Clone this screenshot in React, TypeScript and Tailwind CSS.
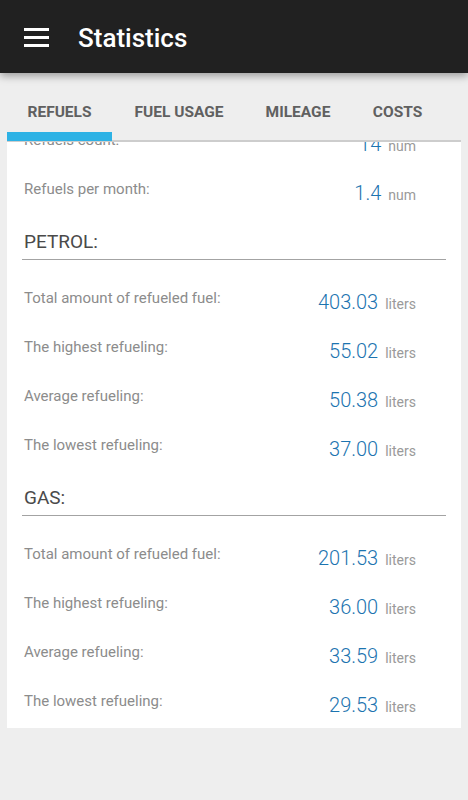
import React from 'react';

const tabs = [
  { label: 'REFUELS', w: 'w-[105px]', active: true },
  { label: 'FUEL USAGE', w: 'w-[134px]', active: false },
  { label: 'MILEAGE', w: 'w-[104px]', active: false },
  { label: 'COSTS', w: 'w-[95px]', active: false },
];

const sections = [
  {
    title: 'PETROL:',
    rows: [
      { label: 'Total amount of refueled fuel:', value: '403.03' },
      { label: 'The highest refueling:', value: '55.02' },
      { label: 'Average refueling:', value: '50.38' },
      { label: 'The lowest refueling:', value: '37.00' },
    ],
  },
  {
    title: 'GAS:',
    rows: [
      { label: 'Total amount of refueled fuel:', value: '201.53' },
      { label: 'The highest refueling:', value: '36.00' },
      { label: 'Average refueling:', value: '33.59' },
      { label: 'The lowest refueling:', value: '29.53' },
    ],
  },
];

function StatRow({ label, value, unit }: { label: string; value: string; unit: string }) {
  return (
    <div className="flex h-[49px] justify-between pl-[17px] pr-[45px]">
      <div className="pt-[9px] text-[15px] leading-[20px] text-[#8c8c8c]">{label}</div>
      <div className="flex items-baseline gap-[7px] pt-[11px]">
        <span className="text-[20px] font-light leading-[24px] text-[#1c74b0]">{value}</span>
        <span className="text-[14px] leading-[20px] text-[#9a9a9a]">{unit}</span>
      </div>
    </div>
  );
}

function SectionHeader({ title }: { title: string }) {
  return (
    <div className="pl-[15px] pr-[15px] pt-[11px]">
      <div className="pl-[2px] text-[19px] leading-[24px] text-[#4a4a4a]">{title}</div>
      <div className="mt-[5px] h-px bg-[#a3a3a3]" />
    </div>
  );
}

export default function App() {
  return (
    <div className="flex h-[800px] w-[468px] flex-col bg-[#eeeeee] font-['Roboto',sans-serif]">
      <header className="relative z-10 flex h-[73px] items-center bg-[#212121] pl-[24px] shadow-[0_3px_8px_rgba(0,0,0,0.35)]">
        <svg width="25" height="19" viewBox="0 0 25 19" className="mt-[1px]">
          <rect x="0" y="0" width="25" height="3" fill="#ffffff" />
          <rect x="0" y="8" width="25" height="3" fill="#ffffff" />
          <rect x="0" y="16" width="25" height="3" fill="#ffffff" />
        </svg>
        <h1 className="ml-[29px] mt-[3px] text-[26px] font-medium leading-none text-white">Statistics</h1>
      </header>

      <div className="mx-[7px] pt-[29px]">
        <div className="flex">
          {tabs.map((t) => (
            <div key={t.label} className={`${t.w} flex flex-col items-center`}>
              <div className="h-[20px] text-[15.5px] font-bold leading-[20px] text-[#606060]">{t.label}</div>
              <div className={`mt-[10px] h-[9px] w-full ${t.active ? 'bg-[#2db2e5]' : ''}`} />
            </div>
          ))}
        </div>
        <div className="-mt-px h-[2px] bg-[#cdcdcd]" />
      </div>

      <div className="mx-[7px] h-[586px] overflow-hidden bg-white">
        <div className="-mt-[21px]">
          <StatRow label="Refuels count:" value="14" unit="num" />
          <StatRow label="Refuels per month:" value="1.4" unit="num" />
          {sections.map((s) => (
            <div key={s.title}>
              <SectionHeader title={s.title} />
              <div className="pt-[19px]">
                {s.rows.map((r) => (
                  <StatRow key={r.label} label={r.label} value={r.value} unit="liters" />
                ))}
              </div>
            </div>
          ))}
        </div>
      </div>
    </div>
  );
}
